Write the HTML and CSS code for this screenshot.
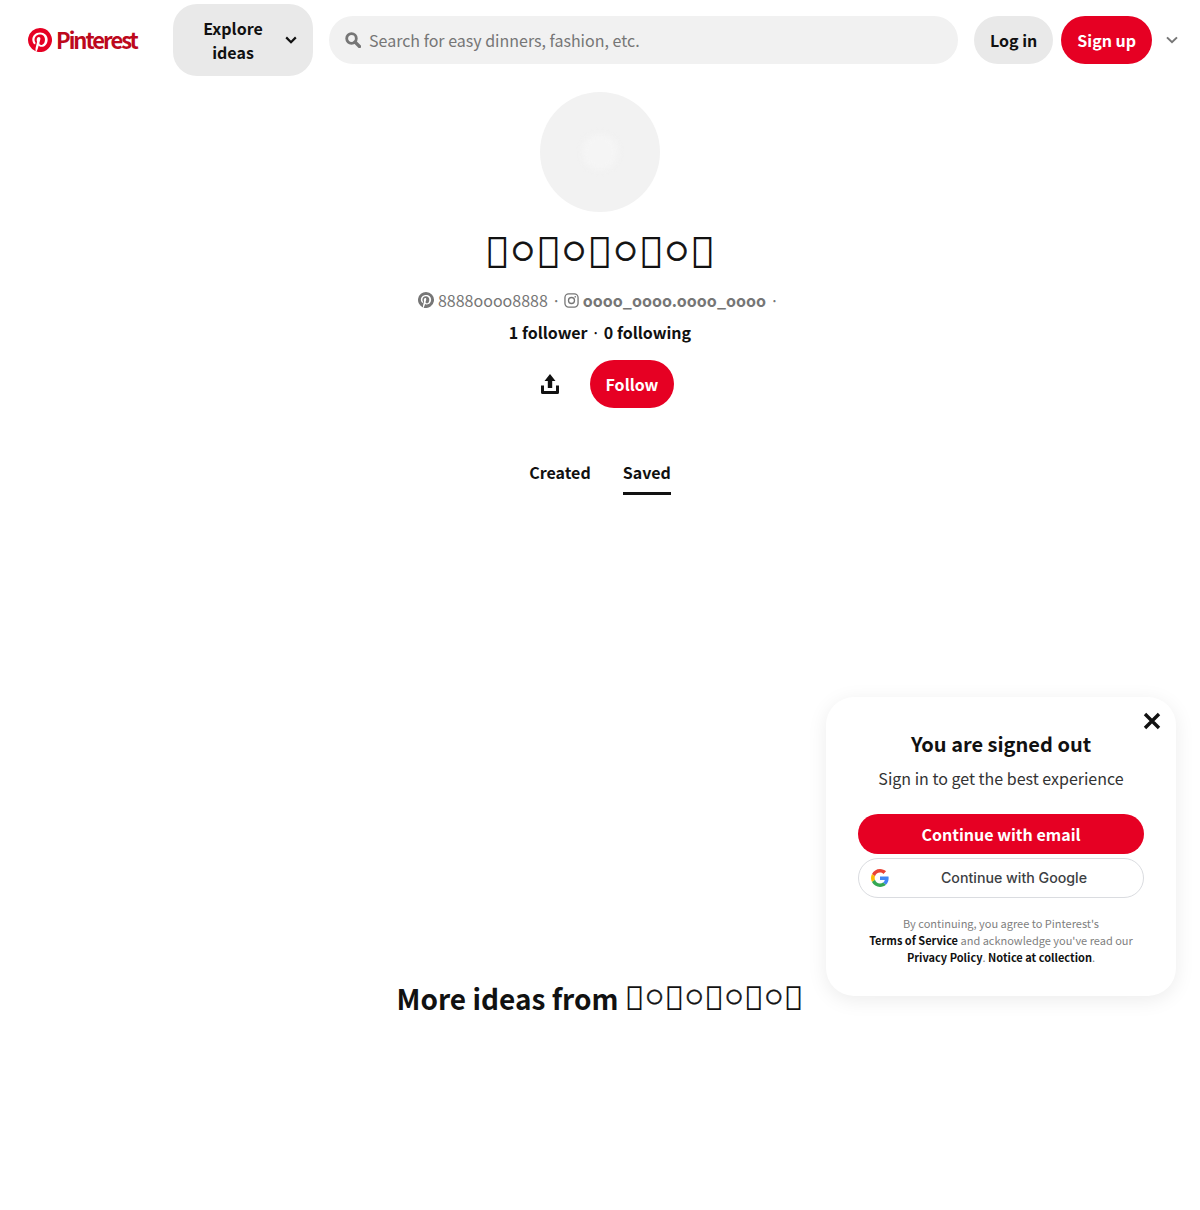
FILE: index.html
```html
<!DOCTYPE html>
<html lang="en">
<head>
  <meta charset="UTF-8">
  <meta name="viewport" content="width=device-width, initial-scale=1.0">
  <title>Pinterest</title>
  <link rel="stylesheet" href="styles.css">
</head>
<body>

<div class="topbar">
  <a class="logo">
    <svg class="logo-icon" viewBox="0 0 24 24"><path fill="#e60023" d="M12 0a12 12 0 0 0-4.37 23.17c-.1-.95-.2-2.4.04-3.44l1.4-5.96s-.35-.71-.35-1.78c0-1.67.97-2.91 2.17-2.91 1.02 0 1.52.77 1.52 1.69 0 1.03-.66 2.57-1 3.99-.28 1.2.6 2.17 1.78 2.17 2.13 0 3.77-2.25 3.77-5.49 0-2.87-2.06-4.88-5.01-4.88-3.41 0-5.42 2.56-5.42 5.2 0 1.03.4 2.14.9 2.74.1.12.11.22.08.34l-.33 1.36c-.05.22-.18.27-.41.16-1.5-.7-2.43-2.89-2.43-4.65 0-3.78 2.75-7.26 7.92-7.26 4.16 0 7.39 2.96 7.39 6.93 0 4.13-2.6 7.46-6.22 7.46-1.21 0-2.36-.63-2.75-1.38l-.75 2.85c-.27 1.04-1 2.35-1.49 3.15A12 12 0 1 0 12 0z"/></svg>
    <span class="logo-text">Pinterest</span>
  </a>
  <button class="explore-btn">
    <span class="explore-label">Explore ideas</span>
    <svg class="chevron" viewBox="0 0 12 8"><path d="M1.2 1.400 6 6.200l4.800-4.800" fill="none" stroke="#111" stroke-width="2.200"/></svg>
  </button>
  <div class="search">
    <svg class="search-icon" viewBox="0 0 16 16"><circle cx="6.500" cy="6.500" r="4.800" fill="none" stroke="#767676" stroke-width="2.800"/><path d="m10 10 4.500 4.500" stroke="#767676" stroke-width="3.200" stroke-linecap="round"/></svg>
    <span>Search for easy dinners, fashion, etc.</span>
  </div>
  <button class="pill pill-grey">Log in</button>
  <button class="pill pill-red">Sign up</button>
  <svg class="more-chevron" viewBox="0 0 12 8"><path d="M1 1.400 6 6.200l5-4.800" fill="none" stroke="#767676" stroke-width="2"/></svg>
</div>

<div class="profile">
  <div class="avatar"><div class="avatar-dot"></div></div>
  <h1 class="name">&#xE000;<span class="ring">○</span>&#xE000;<span class="ring">○</span>&#xE000;<span class="ring">○</span>&#xE000;<span class="ring">○</span>&#xE000;</h1>
  <div class="meta">
    <svg class="meta-icon" viewBox="0 0 24 24"><path fill="#767676" d="M12 0a12 12 0 0 0-4.37 23.17c-.1-.95-.2-2.4.04-3.44l1.4-5.96s-.35-.71-.35-1.78c0-1.67.97-2.91 2.17-2.91 1.02 0 1.52.77 1.52 1.69 0 1.03-.66 2.57-1 3.99-.28 1.2.6 2.17 1.78 2.17 2.13 0 3.77-2.25 3.77-5.49 0-2.87-2.06-4.88-5.01-4.88-3.41 0-5.42 2.56-5.42 5.2 0 1.03.4 2.14.9 2.74.1.12.11.22.08.34l-.33 1.36c-.05.22-.18.27-.41.16-1.5-.7-2.43-2.89-2.43-4.65 0-3.78 2.75-7.26 7.92-7.26 4.16 0 7.39 2.96 7.39 6.93 0 4.13-2.6 7.46-6.22 7.46-1.21 0-2.36-.63-2.75-1.38l-.75 2.85c-.27 1.04-1 2.35-1.49 3.15A12 12 0 1 0 12 0z"/></svg>
    <span class="handle">8888oooo8888</span>
    <span class="dot">·</span>
    <svg class="meta-icon insta" viewBox="0 0 16 16"><rect x="1" y="1" width="14" height="14" rx="4" fill="none" stroke="#767676" stroke-width="1.400"/><circle cx="8" cy="8" r="3.200" fill="none" stroke="#767676" stroke-width="1.400"/><circle cx="12" cy="4" r="0.900" fill="#767676"/></svg>
    <span class="handle-bold">oooo_oooo.oooo_oooo</span>
    <span class="dot">·</span>
  </div>
  <div class="counts">1 follower <span class="counts-dot">·</span> 0 following</div>
  <div class="actions">
    <button class="share-btn">
      <svg viewBox="0 0 20 20" width="20" height="20"><path fill="#111" d="M10 0 15.500 7H12.200v7H7.800V7H4.500z"/><path fill="none" stroke="#111" stroke-width="3" stroke-linejoin="round" d="M2.500 11.500v7h15v-7"/></svg>
    </button>
    <button class="pill pill-red">Follow</button>
  </div>
  <div class="tabs">
    <div class="tab">Created</div>
    <div class="tab tab-active">Saved</div>
  </div>
  <h2 class="more-ideas">More ideas from <span class="more-name">&#xE000;<span class="ring-small">○</span>&#xE000;<span class="ring-small">○</span>&#xE000;<span class="ring-small">○</span>&#xE000;<span class="ring-small">○</span>&#xE000;</span></h2>
</div>

<div class="signin-popup">
  <svg class="close-icon" viewBox="0 0 18 18"><path d="m2 2 14 14M16 2 2 16" stroke="#111" stroke-width="3.400"/></svg>
  <h3 class="popup-title">You are signed out</h3>
  <p class="popup-sub">Sign in to get the best experience</p>
  <button class="popup-email">Continue with email</button>
  <button class="popup-google">
    <svg class="google-icon" viewBox="0 0 48 48">
      <path fill="#EA4335" d="M24 9.500c3.500 0 6.700 1.200 9.200 3.600l6.900-6.900C35.900 2.400 30.500 0 24 0 14.600 0 6.500 5.400 2.600 13.200l8 6.200C12.400 13.700 17.700 9.500 24 9.500z"/>
      <path fill="#4285F4" d="M47 24.500c0-1.600-.1-3.100-.4-4.500H24v9h12.900c-.6 3-2.300 5.500-4.800 7.200l7.700 6c4.500-4.200 7.200-10.300 7.200-17.700z"/>
      <path fill="#FBBC05" d="M10.600 28.600c-.5-1.400-.8-3-.8-4.600s.3-3.200.8-4.600l-8-6.200C.900 16.500 0 20.100 0 24s.900 7.500 2.600 10.800l8-6.200z"/>
      <path fill="#34A853" d="M24 48c6.500 0 11.900-2.100 15.800-5.800l-7.700-6c-2.100 1.400-4.900 2.300-8.100 2.300-6.300 0-11.600-4.200-13.400-9.900l-8 6.200C6.500 42.600 14.600 48 24 48z"/>
    </svg>
    <span>Continue with Google</span>
  </button>
  <p class="popup-legal">By continuing, you agree to Pinterest's<br><b>Terms of Service</b> and acknowledge you've read our<br><b>Privacy Policy</b>. <b>Notice at collection</b>.</p>
</div>

</body>
</html>
```

FILE: styles.css
```css
* { box-sizing: border-box; }
body { margin: 0; height: 1210px; background: white; color: #111; font-family: "Noto Sans CJK JP", "Noto Sans", sans-serif; overflow: hidden; }
button { font-family: inherit; border: none; cursor: pointer; }

.topbar { height: 80px; padding: 4px 20px 4px 28px; display: flex; align-items: center; }
.logo { display: flex; align-items: center; gap: 4px; width: 145px; color: #bd081c; }
.logo-icon { width: 24px; height: 24px; }
.logo-text { font-size: 22px; font-weight: 700; letter-spacing: -2px; margin-top: -2px; }
.explore-btn { width: 140px; height: 72px; border-radius: 24px; background: #e9e9e9; color: #111; font-size: 16px; font-weight: 700; line-height: 24px; display: flex; align-items: center; padding: 0 16px 0 20px; }
.explore-label { width: 80px; text-align: center; }
.chevron { width: 12px; height: 8px; margin-left: auto; }
.search { width: 629px; height: 48px; margin: 0 16px; border-radius: 24px; background: #f1f1f1; color: #767676; font-size: 16px; display: flex; align-items: center; gap: 8px; padding-left: 16px; }
.search-icon { width: 16px; height: 16px; }
.pill { height: 48px; padding: 0 16px; border-radius: 24px; font-size: 16px; font-weight: 700; }
.pill-grey { background: #e9e9e9; color: #111; margin-right: 8px; }
.pill-red { background: #e60023; color: white; }
.more-chevron { width: 12px; height: 8px; margin-left: 14px; }

.profile { display: flex; flex-direction: column; align-items: center; padding-top: 12px; }
.avatar { width: 120px; height: 120px; border-radius: 50%; background: #f2f2f2; display: flex; align-items: center; justify-content: center; }
.avatar-dot { width: 36px; height: 36px; border-radius: 50%; background: #f5f5f5; filter: blur(3px); }
.name { margin: 13px 0 0; font-family: "Noto Sans", sans-serif; font-size: 43px; line-height: 54px; font-weight: 700; }
.ring { vertical-align: 4px; line-height: 0; -webkit-text-stroke: 0.8px #111; }
.meta { margin: 9px 3px 0 0; display: flex; align-items: center; gap: 4px; height: 24px; color: #767676; font-size: 16px; }
.meta-icon { width: 16px; height: 16px; }
.insta { width: 15px; height: 15px; margin-left: -1px; }
.handle-bold { font-weight: 700; }
.counts { margin-top: 8px; font-size: 16px; font-weight: 700; line-height: 24px; }
.counts-dot { font-weight: 400; }
.actions { margin-top: 16px; display: flex; align-items: center; gap: 16px; }
.share-btn { width: 48px; height: 48px; background: none; display: flex; align-items: center; justify-content: center; padding: 0; }
.tabs { margin-top: 40px; display: flex; gap: 32px; }
.tab { font-size: 16px; font-weight: 700; line-height: 48px; height: 47px; border-bottom: 3px solid transparent; }
.tab-active { border-bottom-color: #111; }
.more-ideas { margin: 482px 0 0; font-size: 28px; line-height: 42px; font-weight: 700; }
.more-name { font-family: "Noto Sans", sans-serif; font-size: 33.300px; font-weight: 700; line-height: 0; }
.ring-small { vertical-align: 3px; line-height: 0; -webkit-text-stroke: 0.5px #111; }

.signin-popup { position: absolute; left: 826px; top: 697px; width: 350px; height: 299px; border-radius: 28px; background: white; box-shadow: 0 4px 20px rgba(0, 0, 0, 0.08); padding: 32px 32px 0; display: flex; flex-direction: column; align-items: center; text-align: center; }
.close-icon { position: absolute; top: 15px; right: 15px; width: 18px; height: 18px; }
.popup-title { margin: 0; font-size: 20px; line-height: 30px; font-weight: 700; }
.popup-sub { margin: 7px 0 0; font-size: 16px; line-height: 24px; color: #333; }
.popup-email { margin-top: 24px; width: 286px; height: 40px; border-radius: 20px; background: #e60023; color: white; font-size: 16px; font-weight: 700; flex: none; }
.popup-google { position: relative; margin-top: 4px; width: 286px; height: 40px; border-radius: 20px; background: white; border: 1px solid #dadce0; color: #3c4043; font-family: Inter, sans-serif; font-size: 14.200px; font-weight: 500; flex: none; padding: 0 0 2px 26px; }
.google-icon { position: absolute; left: 12px; top: 10px; width: 18px; height: 18px; }
.popup-legal { margin: 17px 0 0; font-size: 11px; line-height: 17px; color: #808080; white-space: nowrap; }
.popup-legal b { color: #111; }
```
